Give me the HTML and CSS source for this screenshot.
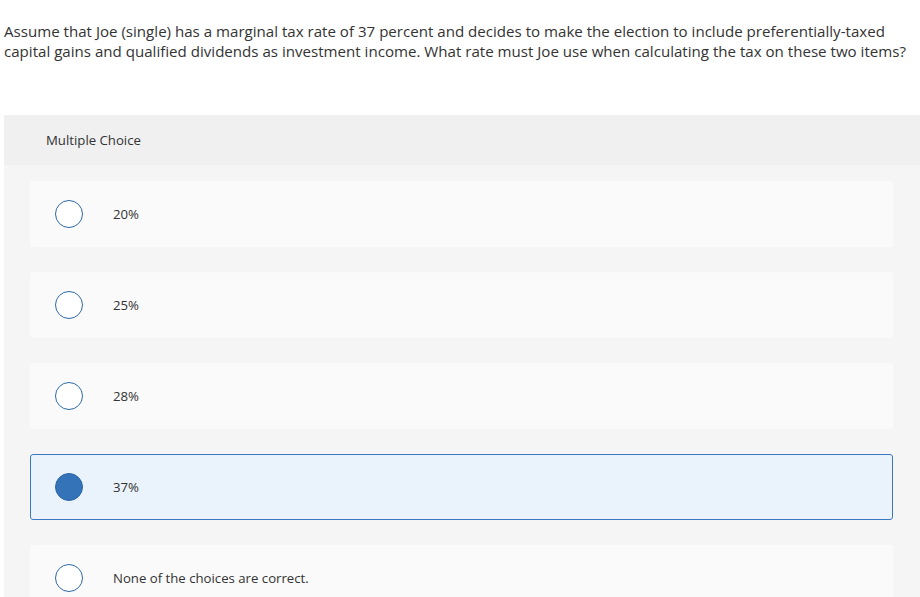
FILE: index.html
```html
<!DOCTYPE html>
<html>
<head>
<meta charset="utf-8">
<link rel="stylesheet" href="styles.css">
</head>
<body>
<p class="question">Assume that Joe (single) has a marginal tax rate of 37 percent and decides to make the election to include preferentially-taxed capital gains and qualified dividends as investment income. What rate must Joe use when calculating the tax on these two items?</p>
<section class="panel">
  <div class="panel-head">Multiple Choice</div>
  <div class="choices">
    <div class="choice"><span class="radio"></span><span class="label">20%</span></div>
    <div class="choice"><span class="radio"></span><span class="label">25%</span></div>
    <div class="choice"><span class="radio"></span><span class="label">28%</span></div>
    <div class="choice selected"><span class="radio"></span><span class="label">37%</span></div>
    <div class="choice"><span class="radio"></span><span class="label">None of the choices are correct.</span></div>
  </div>
</section>
</body>
</html>
```
FILE: styles.css
```css
html, body {
  margin: 0;
  padding: 0;
  background: #fff;
  overflow: hidden;
}
body {
  padding-left: 4px;
  font-family: "Open Sans", "Lato", sans-serif;
  color: #333;
}
.question {
  margin: 0;
  padding-top: 21px;
  font-size: 15.1px;
  line-height: 20px;
  color: #333;
}
.panel {
  margin-top: 54px;
  background: #f5f5f5;
}
.panel-head {
  height: 50px;
  background: #f0f0f0;
  display: flex;
  align-items: center;
  padding-left: 42px;
  font-size: 13.2px;
  color: #333;
}
.choices {
  display: flex;
  flex-direction: column;
  gap: 25px;
  padding: 16px 27px 30px 26px;
}
.choice {
  height: 66px;
  box-sizing: border-box;
  background: #fafafa;
  border-radius: 3px;
  display: flex;
  align-items: center;
  padding-left: 25px;
  font-size: 13.2px;
  color: #333;
}
.choice.selected {
  background: #eaf2fc;
  border: 1px solid #3a78c3;
  padding-left: 24px;
}
.radio {
  width: 28px;
  height: 28px;
  box-sizing: border-box;
  border-radius: 50%;
  border: 1.5px solid #2f6aa6;
  background: #fff;
  flex: none;
}
.selected .radio {
  background: #3473b8;
  border-color: #2d67a6;
}
.label {
  margin-left: 30px;
}
```
